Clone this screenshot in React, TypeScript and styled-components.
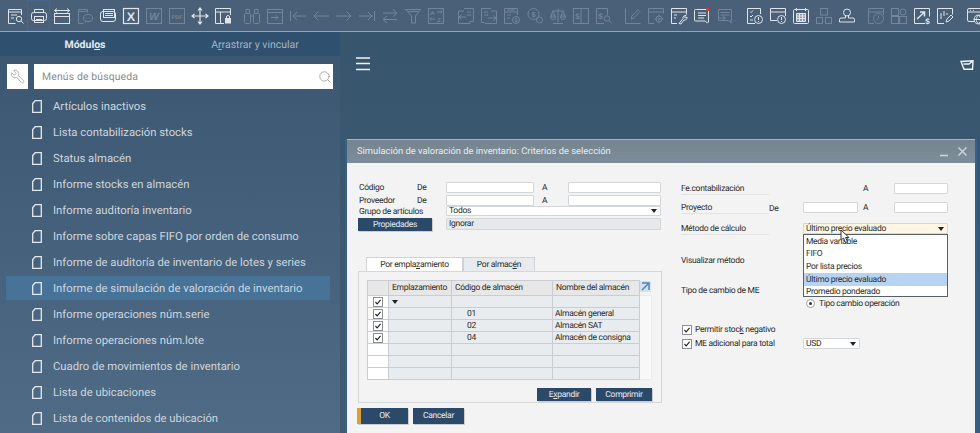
import React from 'react'
import styled, { createGlobalStyle } from 'styled-components'
import { Search, Wrench } from 'lucide-react'

const GlobalStyle = createGlobalStyle`
    html, body {
        margin: 0;
        padding: 0;
        height: 100%;
        overflow: hidden;
        background: #3d5a74;
    }
    * { box-sizing: border-box; }
`

const Page = styled.div`
    width: 980px;
    height: 433px;
    display: flex;
    flex-direction: column;
    overflow: hidden;
    font-family: Roboto, sans-serif;
    text-rendering: geometricPrecision;
`

const Toolbar = styled.div`
    flex: none;
    height: 32px;
    padding: 0 0 0 4px;
    display: flex;
    align-items: center;
    gap: 6.5px;
    background: #4a5f78;
    border-bottom: 1px solid #8fa6b5;
`

const ToolGroup = styled.div`
    display: flex;
`

const ToolButton = styled.div<{ $dim?: boolean; $active?: boolean }>`
    width: 23px;
    height: 31px;
    display: flex;
    align-items: center;
    justify-content: center;
    color: ${p => (p.$dim ? '#72859a' : '#dfe5ea')};
    border: 1px solid ${p => (p.$active ? '#46668c' : 'transparent')};
    svg {
        width: 16px;
        height: 16px;
        fill: none;
        stroke: currentColor;
        stroke-width: 1;
        overflow: visible;
    }
    text {
        fill: currentColor;
        stroke: none;
        font-family: "Liberation Sans", sans-serif;
        font-weight: 700;
        text-anchor: middle;
    }
`

const Columns = styled.div`
    flex: 1;
    min-height: 0;
    display: flex;
`

const Sidebar = styled.aside`
    flex: none;
    width: 340px;
    display: flex;
    flex-direction: column;
    background: linear-gradient(180deg, #3a5670 0%, #4f6b85 100%);
`

const SideTabs = styled.div`
    flex: none;
    height: 24px;
    display: grid;
    grid-template-columns: 170px 170px;
    background: #2f506e;
`

const SideTab = styled.div<{ $on?: boolean }>`
    display: flex;
    align-items: center;
    justify-content: center;
    font-size: 10.5px;
    font-weight: ${p => (p.$on ? 700 : 400)};
    color: ${p => (p.$on ? '#e4ebf1' : '#a5b6c6')};
`

const SearchRow = styled.div`
    flex: none;
    margin: 8px 7px 5px;
    height: 25px;
    display: flex;
    gap: 6px;
`

const WrenchBox = styled.div`
    width: 21px;
    display: flex;
    align-items: center;
    justify-content: center;
    background: #fff;
    color: #9a9a9a;
    svg {
        transform: scaleX(-1);
    }
`

const SearchBox = styled.div`
    width: 299px;
    padding: 0 1px 0 8px;
    display: flex;
    align-items: center;
    justify-content: space-between;
    background: #fff;
    color: #8a8a8a;
    font-size: 10.4px;
    letter-spacing: 0.15px;
`

const MenuList = styled.ul`
    margin: 0;
    padding: 0 0 0 6px;
    list-style: none;
`

const MenuItem = styled.li<{ $on?: boolean }>`
    width: 324px;
    height: 24px;
    margin-bottom: 2px;
    padding-left: 26px;
    display: flex;
    align-items: center;
    gap: 11px;
    background: ${p => (p.$on ? '#477399' : 'transparent')};
    color: #ced6de;
    font-size: 11.3px;
    white-space: nowrap;
`

const PageIcon = styled.svg`
    flex: none;
    width: 10px;
    height: 13px;
    fill: none;
    stroke: #e4e9ee;
    stroke-width: 1.3;
`

const Main = styled.main`
    flex: 1;
    min-width: 0;
    padding-left: 7px;
    display: flex;
    flex-direction: column;
    background: linear-gradient(180deg, #38556e 0%, #3f5c76 100%);
`

const MainBar = styled.div`
    flex: none;
    height: 107px;
    padding: 25px 6px 0 9px;
    display: flex;
    align-items: flex-start;
    justify-content: space-between;
    color: #f2f4f6;
    svg {
        fill: none;
        stroke: currentColor;
    }
    svg + svg {
        margin-top: 3px;
    }
`

const Dialog = styled.section`
    flex: none;
    width: 628px;
    height: 296px;
    display: flex;
    flex-direction: column;
    border-top: 1px solid #cdb36c;
    background: #f3f3f3;
    box-shadow: -2px 0 0 #34608a, 2px 0 0 #34608a;
    color: #2c2c2c;
    font-size: 8.5px;
    letter-spacing: -0.3px;
`

const TitleBar = styled.header`
    flex: none;
    height: 23px;
    padding: 0 7px 0 10px;
    display: flex;
    align-items: center;
    justify-content: space-between;
    background: linear-gradient(180deg, #75858f 0%, #7d8c99 100%);
    color: #e9edf0;
    font-size: 9.35px;
    letter-spacing: 0;
`

const WindowControls = styled.div`
    display: flex;
    gap: 7px;
    svg {
        width: 11px;
        height: 11px;
        stroke: #c9d2d9;
        stroke-width: 1.6;
        fill: none;
    }
`

const DialogBody = styled.div`
    flex: 1;
    padding: 19px 0 0 11px;
    display: grid;
    grid-template-columns: 304px 267px;
    column-gap: 19px;
`

const Left = styled.div`
    display: flex;
    flex-direction: column;
`

const FormGrid = styled.div`
    display: grid;
    grid-template-columns: 59px 29px 88px 34px 93px;
    grid-template-rows: 13px 11px 12px 13px;
    align-items: start;
`

const Label = styled.span<{ $span?: number; $x?: number }>`
    grid-column: span ${p => p.$span || 1};
    height: 11px;
    padding-left: ${p => p.$x ?? 1}px;
    display: flex;
    align-items: center;
    white-space: nowrap;
`

const FieldLabel = styled.span`
    height: 12px;
    padding-top: 1px;
    margin-top: 1px;
    display: flex;
    align-items: center;
    border-bottom: 1px solid #e3e3e3;
    white-space: nowrap;
`

const TextField = styled.div<{ $span?: number; $h?: number; $bg?: string }>`
    grid-column: span ${p => p.$span || 1};
    position: relative;
    height: ${p => p.$h || 11}px;
    padding: 0 2px;
    display: flex;
    align-items: center;
    justify-content: space-between;
    background: ${p => p.$bg || '#fff'};
    border: 1px solid #d4d7da;
    border-radius: 1px;
    white-space: nowrap;
`

const Caret = styled.i`
    width: 0;
    height: 0;
    margin-right: 1px;
    border-left: 3.5px solid transparent;
    border-right: 3.5px solid transparent;
    border-top: 4px solid #222;
`

const NavyButton = styled.button<{ $gold?: boolean; $w: number; $h?: number }>`
    width: ${p => p.$w}px;
    height: ${p => p.$h || 13}px;
    padding: 0;
    border: 0;
    border-left: ${p => (p.$gold ? '4px solid #d9a233' : '0')};
    background: #2b4a69;
    box-shadow: 1px 1px 0 #c9cdd1;
    color: #e6ebf0;
    font: inherit;
    letter-spacing: inherit;
    text-rendering: inherit;
`

const Tabs = styled.div`
    margin: 26px 0 0 8px;
    height: 14px;
    display: flex;
`

const Tab = styled.div<{ $w: number; $on?: boolean }>`
    width: ${p => p.$w}px;
    display: flex;
    align-items: center;
    justify-content: center;
    background: ${p => (p.$on ? '#fff' : '#e7ebee')};
    border: 1px solid #d0d3d6;
    border-bottom: 0;
`

const Pane = styled.div`
    height: 132px;
    padding: 8px 9px 0 8px;
    border: 1px solid #d4d6d8;
    display: flex;
    flex-direction: column;
`

const GridWrap = styled.div`
    position: relative;
    display: flex;
`

const Table = styled.table`
    width: 272px;
    border-collapse: collapse;
    table-layout: fixed;
    line-height: 10px;
    th, td {
        padding: 0 0 0 2px;
        border: 1px solid #c9cdd1;
        font-weight: 400;
        text-align: left;
        white-space: nowrap;
        overflow: hidden;
    }
    th {
        height: 15px;
        padding-left: 3px;
        background: #e7e7e7;
    }
    td {
        height: 12px;
        background: #e8ecef;
    }
    td:first-child {
        background: #fff;
        padding: 0;
    }
    td.code {
        padding-left: 15px;
    }
`

const CellCaret = styled(Caret)`
    display: block;
    margin: 0 0 0 1px;
`

const GridScroll = styled.div`
    width: 14px;
    margin-top: 15px;
    background: #f8f8f8;
    border: 1px solid #ececec;
    border-left: 0;
`

const LinkArrow = styled.svg`
    position: absolute;
    left: 273px;
    top: 1px;
    width: 11px;
    height: 11px;
    background: #d5e0ea;
    fill: none;
    stroke: #4d87bd;
    stroke-width: 1.5;
`

const PaneActions = styled.div`
    margin: 8px 0 0;
    display: flex;
    justify-content: flex-end;
    gap: 5px;
`

const Footer = styled.div`
    margin: 5px 0 0 -1px;
    display: flex;
    gap: 5px;
`

const Right = styled.div`
    display: flex;
    flex-direction: column;
`

const FieldRow = styled.div<{ $top?: number }>`
    height: 11px;
    margin-top: ${p => p.$top || 0}px;
    display: grid;
    grid-template-columns: 88px 34px 55px 36px 54px;
    align-items: center;
`

const PlainLabel = styled.span`
    padding-top: 2px;
    white-space: nowrap;
`

const ListBox = styled.ul`
    position: absolute;
    z-index: 2;
    left: -1px;
    right: -1px;
    top: 10px;
    height: 63px;
    margin: 0;
    padding: 0.5px 0 0;
    list-style: none;
    overflow: hidden;
    background: #fff;
    border: 1px solid #55606a;
`

const ListItem = styled.li<{ $on?: boolean }>`
    height: 12.6px;
    padding-left: 2px;
    display: flex;
    align-items: center;
    background: ${p => (p.$on ? '#b8d2f2' : 'transparent')};
`

const Pointer = styled.svg`
    position: absolute;
    z-index: 3;
    left: 36px;
    top: 5px;
    width: 10px;
    height: 15px;
    fill: #fff;
    stroke: #30373d;
    stroke-width: 1;
`

const RadioRow = styled.div`
    margin: 3px 0 0 125px;
    height: 11px;
    display: flex;
    align-items: center;
    gap: 4px;
`

const Radio = styled.span`
    width: 9px;
    height: 9px;
    display: flex;
    align-items: center;
    justify-content: center;
    border: 1px solid #9da3a8;
    border-radius: 50%;
    background: #fff;
    &::after {
        content: '';
        width: 3px;
        height: 3px;
        border-radius: 50%;
        background: #333;
    }
`

const CheckRow = styled.div<{ $top: number }>`
    height: 11px;
    margin-top: ${p => p.$top}px;
    display: grid;
    grid-template-columns: 122px 57px;
    align-items: center;
`

const CheckLabel = styled.label`
    display: flex;
    align-items: center;
    gap: 3px;
    white-space: nowrap;
`

const CheckBox = styled.svg<{ $center?: boolean }>`
    flex: none;
    display: block;
    width: 10px;
    height: 10px;
    margin: ${p => (p.$center ? '0 auto' : '0 0 0 1px')};
    background: #fff;
    border: 1px solid #8b9196;
    fill: none;
    stroke: #222;
    stroke-width: 1.4;
`

const Check = ({ $center }: { $center?: boolean }) => (
    <CheckBox $center={$center} viewBox="0 0 10 10"><path d="M1.8 5 4 7.4 8.2 2.4" /></CheckBox>
)

type Tool = { dim?: boolean; active?: boolean; art: React.ReactNode }

const groups: Tool[][] = [
    [
        { art: <><path d="M13.5 7V1.5h-13v14h7M.5 4h13M3 7h6M3 10h3" /><circle cx="11" cy="11" r="2.7" /><path d="M13 13l2.5 2.5" /></> },
        { active: true, art: <><path d="M3.5 4.5v-3h9v3" /><rect x=".5" y="4.5" width="15" height="8" rx="2" /><rect x="3.5" y="8.5" width="9" height="6" /><path d="M5 11.5h6" /></> },
        { art: <><rect x=".5" y="5.5" width="15" height="10" /><path d="M.5 8.5h15M.5 2.5h15M3 .5l-2.5 2 2.5 2M13 .5l2.5 2-2.5 2" /></> },
        { dim: true, art: <><path d="M10.5 4.5v-3h-9v14h5" /><path d="M1.5 3.5h9" /><ellipse cx="11" cy="10" rx="4.5" ry="3.5" /><path d="M9 10h.8M10.6 10h.8M12.2 10h.8M9 13l-1 2" /></> },
        { art: <><rect x=".5" y="3.5" width="15" height="10" rx="2.5" /><rect x="3.5" y="1.5" width="11" height="8" /><path d="M5 5.5h8M5 7.5h8" /></> },
        { art: <><rect x=".5" y=".5" width="15" height="15" strokeWidth="1.2" /><text x="8" y="13" fontSize="12.5">X</text></> },
        { dim: true, art: <><rect x=".5" y=".5" width="15" height="15" /><text x="8" y="12" fontSize="10.5" fontStyle="italic">W</text></> },
        { dim: true, art: <><rect x=".5" y=".5" width="15" height="15" /><text x="8" y="10.5" fontSize="5.5">PDF</text></> },
        { art: <path strokeWidth="1.2" d="M8 0v16M0 8h16M6 2.5 8 0l2 2.5M6 13.5 8 16l2-2.5M2.5 6 0 8l2.5 2M13.5 6 16 8l-2.5 2" /> },
        { art: <><path d="M15.5 7V.5H.5v15H9M.5 4h15M5.5 4v11.5" /><rect x="10.5" y="10.5" width="5" height="4.5" fill="currentColor" /><path d="M11.5 10.5V9a1.5 1.5 0 0 1 3 0v1.5" /></> },
    ],
    [
        { dim: true, art: <><rect x=".5" y="5.5" width="6" height="10" rx="1" /><rect x="9.5" y="5.5" width="6" height="10" rx="1" /><path d="M2 5.5v-4h3.5v4M10.5 5.5v-4H14v4M6.5 8h3" /></> },
        { dim: true, art: <><rect x=".5" y="1.5" width="15" height="14" /><path d="M.5 4.5h15M4 9.5h7M8.5 7l2.5 2.5L8.5 12" /></> },
        { dim: true, art: <path d="M.5 3v10M3 8h13M7 4 3 8l4 4" /> },
        { dim: true, art: <path d="M16 8H1M5.5 3.5 1 8l4.5 4.5" /> },
        { dim: true, art: <path d="M0 8h15M10.5 3.5 15 8l-4.5 4.5" /> },
        { dim: true, art: <path d="M15.5 3v10M0 8h13M9 4l4 4-4 4" /> },
        { dim: true, art: <path d="M1 5h14M11 1.5 15 5l-4 3.5M15 11.5H1M5 8 1 11.5 5 15" /> },
        { dim: true, art: <path d="M.5 1.5h15L10.5 8v7h-4V8zM2.5 3.5h11" /> },
        { dim: true, art: <><rect x=".5" y=".5" width="15" height="15" /><text x="4.5" y="7" fontSize="6">A</text><text x="11" y="14" fontSize="6">Z</text><path d="M9 4h5M12.5 2.5 14 4l-1.5 1.5M7 11H2M3.5 9.5 2 11l1.5 1.5" /></> },
    ],
    [
        { dim: true, art: <><path d="M6 .5h9.5v13H12M.5 3v12.5H12V13" /><path d="M.5 3H6M9 4h4M9 7h4M1 9h7M3.5 6.5 1 9l2.5 2.5" /></> },
        { dim: true, art: <><path d="M10 .5H.5v14H4M4 15.5h11.5V3H10" /><path d="M3 4h4M3 7h4M7 10h8M12.5 7.5 15 10l-2.5 2.5" /></> },
        { dim: true, art: <><path d="M8 15.5H.5V.5h13V7M.5 4h13M3 2h8M3 7h4M3 10h3" /><circle cx="12" cy="12" r="3.5" /><text x="12" y="14" fontSize="5.5">$</text></> },
        { dim: true, art: <><circle cx="6.5" cy="6" r="5.5" /><circle cx="12.5" cy="12" r="3" /><text x="6.5" y="8.7" fontSize="7.5">$</text></> },
        { dim: true, art: <><path d="M8 .5v14M3 15.5h10M2 3h12M3 3 .5 9h5zM13 3l-2.5 6h5z" /><rect x=".7" y="7" width="4.6" height="4.5" rx="2" /><rect x="10.7" y="7" width="4.6" height="4.5" rx="2" /></> },
        { dim: true, art: <><rect x=".5" y=".5" width="15" height="15" /><path d="M8 .5v15" /><text x="4.5" y="11" fontSize="8">$</text></> },
        { dim: true, art: <><path d="M8 15.5H.5V.5h11V7" /><text x="4.5" y="11" fontSize="8">$</text><circle cx="11" cy="10.5" r="2.7" /><path d="M13 12.5l2.5 2.5" /></> },
    ],
    [
        { dim: true, art: <path d="M.5 .5v15h15M6 11l1-3 6-6.5 2 2L9 10z" /> },
        { dim: true, art: <><path d="M6 15.5H.5V.5h15v5M.5 4h15" /><circle cx="11" cy="11" r="3" /><circle cx="11" cy="11" r="1" /><path d="M11 6.5V8M11 14v1.5M6.5 11H8M14 11h1.5" /></> },
        { art: <><path d="M6 15.5H.5V.5h15v6M.5 4h15M3 7h3M3 10h2" /><path d="M8 15.5l4-5a2.5 2.5 0 0 1 3-3L13.5 9l1 1 1.5-1a2.5 2.5 0 0 1-3 3l-3 4z" /></> },
        { art: <><path d="M2.5 1.5h12V14l-1 1-2.5-2H1.5a1 1 0 0 1-1-1V2.5a1 1 0 0 1 1-1z" /><path d="M4 5h8M4 7.5h8M4 10h6" /><circle cx="14" cy="1.5" r="1.8" fill="#e4322b" stroke="none" /></> },
        { dim: true, art: <><path d="M1.5 1.5h13v11h-1l1 2.5-3.5-2.5h-9.5z" /><path d="M3.5 4.5h9M3.5 7h9M2 10h6M6 8l2.5 2L6 12" /></> },
    ],
    [
        { art: <><path d="M8 15.5H.5V.5h13V6M3 3.5l1 1 2-2M3 8l1 1 2-2M3 12h3" /><circle cx="11.5" cy="11.5" r="4" /><path d="M11.5 9v3M11.5 13v1" /></> },
        { art: <><path d="M7 12.5H.5V.5h15V8M.5 4h15" /><circle cx="11.5" cy="11.5" r="4" /><path d="M11.5 9v3M11.5 13v1" /></> },
        { art: <><rect x=".5" y="1.5" width="15" height="14" rx="1" /><path d="M3.5 0v3M12.5 0v3" /><path fill="currentColor" fillOpacity=".45" d="M3.5 5.5h9v8h-9z" /><path d="M3.5 8h9M3.5 10.5h9M6.5 5.5v8M9.5 5.5v8" /></> },
        { dim: true, art: <><rect x="4.5" y=".5" width="7" height="6.5" /><rect x=".5" y="9.5" width="6" height="6" /><rect x="9.5" y="9.5" width="6" height="6" /></> },
        { art: <><circle cx="8" cy="4.5" r="3.5" /><path d="M6.5 8v2H2a1.5 1.5 0 0 0-1.5 1.5V14h15v-2.5A1.5 1.5 0 0 0 14 10H9.5V8" /></> },
    ],
    [
        { dim: true, art: <><path d="M6 15.5H.5V.5h15V7M.5 4h15" /><circle cx="10.5" cy="10.5" r="5" /><path d="M10.5 7.5v3l-2 1.5" /></> },
        { dim: true, art: <><rect x=".5" y=".5" width="7" height="7" /><rect x=".5" y="8.5" width="7" height="7" /><rect x="8.5" y="8.5" width="7" height="7" /><circle cx="12" cy="4" r="3" /></> },
        { art: <><path d="M11 15.5H.5V.5h15v8" /><path strokeWidth="1.5" d="M3 11 10 4.5M6 4h4.5v4.5" /><text x="13.5" y="15.5" fontSize="8">$</text></> },
        { art: <><path d="M7 15.5H.5V.5h15v6" /><path d="M4 5v6M7 3v5M10 5v2M9 14l1-3 4-4 2 2-4 4z" /></> },
    ],
    [
        { art: <><path d="M7 13.5H2A1.5 1.5 0 0 1 .5 12V2A1.5 1.5 0 0 1 2 .5h12A1.5 1.5 0 0 1 15.5 2v5M.5 4h15M3 2.2h1M6 2.2h1" /><circle cx="11.5" cy="11.5" r="4.5" /><path d="M7 11.5h9M11.5 7c-3 3-3 6 0 9M11.5 7c3 3 3 6 0 9" /></> },
    ],
]

const menu = [
    'Artículos inactivos',
    'Lista contabilización stocks',
    'Status almacén',
    'Informe stocks en almacén',
    'Informe auditoría inventario',
    'Informe sobre capas FIFO por orden de consumo',
    'Informe de auditoría de inventario de lotes y series',
    'Informe de simulación de valoración de inventario',
    'Informe operaciones núm.serie',
    'Informe operaciones núm.lote',
    'Cuadro de movimientos de inventario',
    'Lista de ubicaciones',
    'Lista de contenidos de ubicación',
]

const warehouses = [
    { code: '', name: '', checked: true, caret: true },
    { code: '01', name: 'Almacén general', checked: true },
    { code: '02', name: 'Almacén SAT', checked: true },
    { code: '04', name: 'Almacén de consigna', checked: true },
    { code: '', name: '' },
    { code: '', name: '' },
    { code: '', name: '' },
]

export default function App() {
    return (
        <Page>
            <GlobalStyle />
            <Toolbar>
                {groups.map((group, i) => (
                    <ToolGroup key={i}>
                        {group.map((tool, j) => (
                            <ToolButton key={j} $dim={tool.dim} $active={tool.active}>
                                <svg viewBox="0 0 16 16">{tool.art}</svg>
                            </ToolButton>
                        ))}
                    </ToolGroup>
                ))}
            </Toolbar>
            <Columns>
                <Sidebar>
                    <SideTabs>
                        <SideTab $on><span>Módul<u>o</u>s</span></SideTab>
                        <SideTab><span>A<u>r</u>rastrar y vincular</span></SideTab>
                    </SideTabs>
                    <SearchRow>
                        <WrenchBox><Wrench size={15} strokeWidth={1.2} /></WrenchBox>
                        <SearchBox>
                            Menús de búsqueda
                            <Search size={14} strokeWidth={1.2} />
                        </SearchBox>
                    </SearchRow>
                    <MenuList>
                        {menu.map(item => (
                            <MenuItem key={item} $on={item.startsWith('Informe de simulación')}>
                                <PageIcon viewBox="0 0 10 13"><path d="M3.2 .7H9.3V12.3H.7V3.5z" /></PageIcon>
                                {item}
                            </MenuItem>
                        ))}
                    </MenuList>
                </Sidebar>
                <Main>
                    <MainBar>
                        <svg width="14" height="14" viewBox="0 0 14 14" strokeWidth="1.3">
                            <path d="M0 1h14M0 6.5h14M0 12.5h14" />
                        </svg>
                        <svg width="14" height="10" viewBox="0 0 14 10" strokeWidth="1.4">
                            <path d="M1 1.5 13 .7l-.5 8.6H4zM3.5 4H9l4-3.3" />
                        </svg>
                    </MainBar>
                    <Dialog>
                        <TitleBar>
                            Simulación de valoración de inventario: Criterios de selección
                            <WindowControls>
                                <svg viewBox="0 0 11 11"><path d="M1 9.5h8" /></svg>
                                <svg viewBox="0 0 11 11"><path d="M1.5 1.5l8 8M9.5 1.5l-8 8" /></svg>
                            </WindowControls>
                        </TitleBar>
                        <DialogBody>
                            <Left>
                                <FormGrid>
                                    <Label>Código</Label><Label $x={0}>De</Label><TextField />
                                    <Label $x={8}>A</Label><TextField />
                                    <Label>Proveedor</Label><Label $x={0}>De</Label><TextField />
                                    <Label $x={8}>A</Label><TextField />
                                    <Label $span={2}>Grupo de artículos</Label>
                                    <TextField $span={3} $h={10}>Todos<Caret /></TextField>
                                    <NavyButton $w={74}>Propiedades</NavyButton>
                                    <span />
                                    <TextField $span={3} $h={12} $bg="#e6eaed">Ignorar</TextField>
                                </FormGrid>
                                <Tabs>
                                    <Tab $w={97} $on><span>Por empla<u>z</u>amiento</span></Tab>
                                    <Tab $w={72}><span>Por almac<u>é</u>n</span></Tab>
                                </Tabs>
                                <Pane>
                                    <GridWrap>
                                        <Table>
                                            <colgroup>
                                                <col style={{ width: 21 }} />
                                                <col style={{ width: 63 }} />
                                                <col style={{ width: 101 }} />
                                                <col style={{ width: 87 }} />
                                            </colgroup>
                                            <thead>
                                                <tr>
                                                    <th />
                                                    <th>Emplazamiento</th>
                                                    <th>Código de almacén</th>
                                                    <th>Nombre del almacén</th>
                                                </tr>
                                            </thead>
                                            <tbody>
                                                {warehouses.map((row, i) => (
                                                    <tr key={i}>
                                                        <td>{row.checked && <Check $center />}</td>
                                                        <td>{row.caret && <CellCaret />}</td>
                                                        <td className="code">{row.code}</td>
                                                        <td>{row.name}</td>
                                                    </tr>
                                                ))}
                                            </tbody>
                                        </Table>
                                        <GridScroll />
                                        <LinkArrow viewBox="0 0 11 11"><path d="M2 2h7v7M9 2 2 9" /></LinkArrow>
                                    </GridWrap>
                                    <PaneActions>
                                        <NavyButton $w={54}>E<u>x</u>pandir</NavyButton>
                                        <NavyButton $w={56}>Comprimir</NavyButton>
                                    </PaneActions>
                                </Pane>
                                <Footer>
                                    <NavyButton $gold $w={51} $h={16}>OK</NavyButton>
                                    <NavyButton $w={51} $h={16}>Cancelar</NavyButton>
                                </Footer>
                            </Left>
                            <Right>
                                <FieldRow>
                                    <FieldLabel>Fe.contabilización</FieldLabel><span /><span />
                                    <Label $x={5}>A</Label><TextField />
                                </FieldRow>
                                <FieldRow $top={8}>
                                    <FieldLabel>Proyecto</FieldLabel><PlainLabel>De</PlainLabel><TextField />
                                    <Label $x={5}>A</Label><TextField />
                                </FieldRow>
                                <FieldRow $top={10}>
                                    <FieldLabel>Método de cálculo</FieldLabel><span />
                                    <TextField $span={3} $bg="#fff7e3">
                                        Último precio evaluado<Caret />
                                        <ListBox>
                                            <ListItem>Media variable</ListItem>
                                            <ListItem>FIFO</ListItem>
                                            <ListItem>Por lista precios</ListItem>
                                            <ListItem $on>Último precio evaluado</ListItem>
                                            <ListItem>Promedio ponderado</ListItem>
                                        </ListBox>
                                        <Pointer viewBox="0 0 10 15"><path d="M1 1v10l2.5-2 2 4.5 2-1-2-4h3.5z" /></Pointer>
                                    </TextField>
                                </FieldRow>
                                <FieldRow $top={21}><PlainLabel>Visualizar método</PlainLabel></FieldRow>
                                <FieldRow $top={19}><PlainLabel>Tipo de cambio de ME</PlainLabel></FieldRow>
                                <RadioRow><Radio />Tipo cambio operación</RadioRow>
                                <CheckRow $top={15}>
                                    <CheckLabel><Check /><span>Permitir stoc<u>k</u> negativo</span></CheckLabel>
                                </CheckRow>
                                <CheckRow $top={3}>
                                    <CheckLabel><Check />ME adicional para total</CheckLabel>
                                    <TextField>USD<Caret /></TextField>
                                </CheckRow>
                            </Right>
                        </DialogBody>
                    </Dialog>
                </Main>
            </Columns>
        </Page>
    )
}
